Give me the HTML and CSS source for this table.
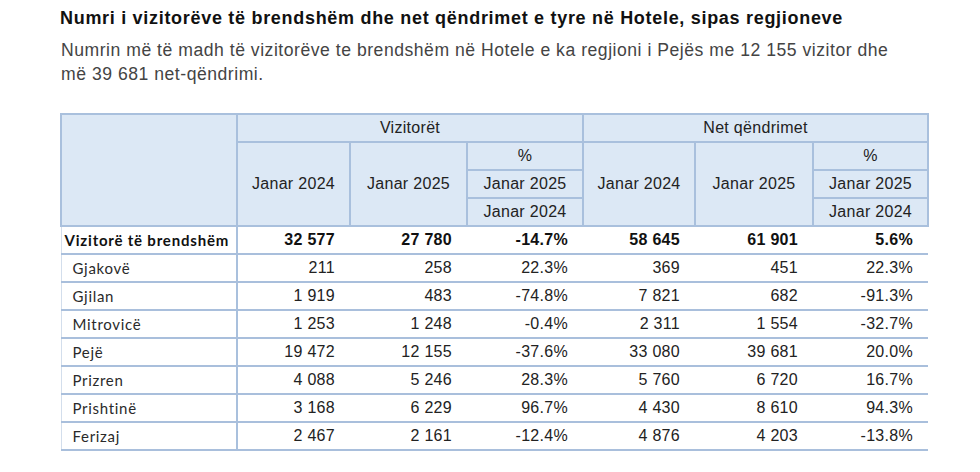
FILE: index.html
```html
<!DOCTYPE html>
<html lang="sq">
<head>
<meta charset="utf-8">
<title>Vizitorët në Hotele</title>
<link rel="stylesheet" href="styles.css">
</head>
<body>
<div class="page">
  <h1 class="title">Numri i vizitorëve të brendshëm dhe net qëndrimet e tyre në Hotele, sipas regjioneve</h1>
  <p class="lead">Numrin më të madh të vizitorëve te brendshëm në Hotele e ka regjioni i Pejës me 12 155 vizitor dhe më 39 681 net-qëndrimi.</p>
  <table class="stats">
    <colgroup>
      <col class="c-label">
      <col class="c1"><col class="c2"><col class="c3">
      <col class="c4"><col class="c5"><col class="c6">
    </colgroup>
    <thead>
      <tr>
        <th rowspan="4" class="corner"></th>
        <th colspan="3">Vizitorët</th>
        <th colspan="3">Net qëndrimet</th>
      </tr>
      <tr>
        <th rowspan="3">Janar 2024</th>
        <th rowspan="3">Janar 2025</th>
        <th>%</th>
        <th rowspan="3">Janar 2024</th>
        <th rowspan="3">Janar 2025</th>
        <th>%</th>
      </tr>
      <tr>
        <th>Janar 2025</th>
        <th>Janar 2025</th>
      </tr>
      <tr>
        <th>Janar 2024</th>
        <th>Janar 2024</th>
      </tr>
    </thead>
    <tbody>
      <tr class="total">
        <td class="label">Vizitorë të brendshëm</td>
        <td>32 577</td><td>27 780</td><td>-14.7%</td>
        <td>58 645</td><td>61 901</td><td>5.6%</td>
      </tr>
      <tr>
        <td class="label">Gjakovë</td>
        <td>211</td><td>258</td><td>22.3%</td>
        <td>369</td><td>451</td><td>22.3%</td>
      </tr>
      <tr>
        <td class="label">Gjilan</td>
        <td>1 919</td><td>483</td><td>-74.8%</td>
        <td>7 821</td><td>682</td><td>-91.3%</td>
      </tr>
      <tr>
        <td class="label">Mitrovicë</td>
        <td>1 253</td><td>1 248</td><td>-0.4%</td>
        <td>2 311</td><td>1 554</td><td>-32.7%</td>
      </tr>
      <tr>
        <td class="label">Pejë</td>
        <td>19 472</td><td>12 155</td><td>-37.6%</td>
        <td>33 080</td><td>39 681</td><td>20.0%</td>
      </tr>
      <tr>
        <td class="label">Prizren</td>
        <td>4 088</td><td>5 246</td><td>28.3%</td>
        <td>5 760</td><td>6 720</td><td>16.7%</td>
      </tr>
      <tr>
        <td class="label">Prishtinë</td>
        <td>3 168</td><td>6 229</td><td>96.7%</td>
        <td>4 430</td><td>8 610</td><td>94.3%</td>
      </tr>
      <tr>
        <td class="label">Ferizaj</td>
        <td>2 467</td><td>2 161</td><td>-12.4%</td>
        <td>4 876</td><td>4 203</td><td>-13.8%</td>
      </tr>
    </tbody>
  </table>
</div>
</body>
</html>
```
FILE: styles.css
```css
html, body {
  margin: 0;
  padding: 0;
  background: #ffffff;
}

.page {
  padding: 8px 0 0 60px;
  font-family: "Liberation Sans", Arial, sans-serif;
  color: #1a1a1a;
}

.title {
  margin: 0;
  font-size: 18px;
  line-height: 20px;
  letter-spacing: 0.7px;
  font-weight: bold;
  color: #111111;
}

.lead {
  margin: 10px 0 0 1px;
  width: 850px;
  font-size: 17.6px;
  line-height: 24px;
  letter-spacing: 0.52px;
  color: #444444;
}

.stats {
  margin-top: 27px;
  border-collapse: collapse;
  table-layout: fixed;
  width: 867px;
  font-size: 16px;
  letter-spacing: 0.3px;
  color: #222222;
}

.c-label { width: 176px; }
.c1 { width: 113px; }
.c2 { width: 117px; }
.c3 { width: 116px; }
.c4 { width: 112px; }
.c5 { width: 118px; }
.c6 { width: 115px; }

.stats th {
  background: #dce8f5;
  border: 2px solid #a9c0dd;
  font-weight: normal;
  height: 26px;
  padding: 0;
  text-align: center;
  vertical-align: middle;
  color: #222222;
}

.stats td {
  height: 26px;
  padding: 0 15px 0 0;
  text-align: right;
  vertical-align: middle;
  border-bottom: 2px solid #a9bfdc;
}

.stats td.label {
  text-align: left;
  padding: 0 0 0 11px;
  font-family: Lato, "Open Sans", sans-serif;
  font-size: 15px;
  letter-spacing: 0.7px;
  color: #2a2a2a;
  border-left: 1px solid #d3deec;
  border-right: 2px solid #a9c0dd;
}

.stats tr.total td {
  font-weight: bold;
  color: #111111;
}

.stats tr.total td.label {
  padding-left: 3px;
  letter-spacing: 0.8px;
}
```
